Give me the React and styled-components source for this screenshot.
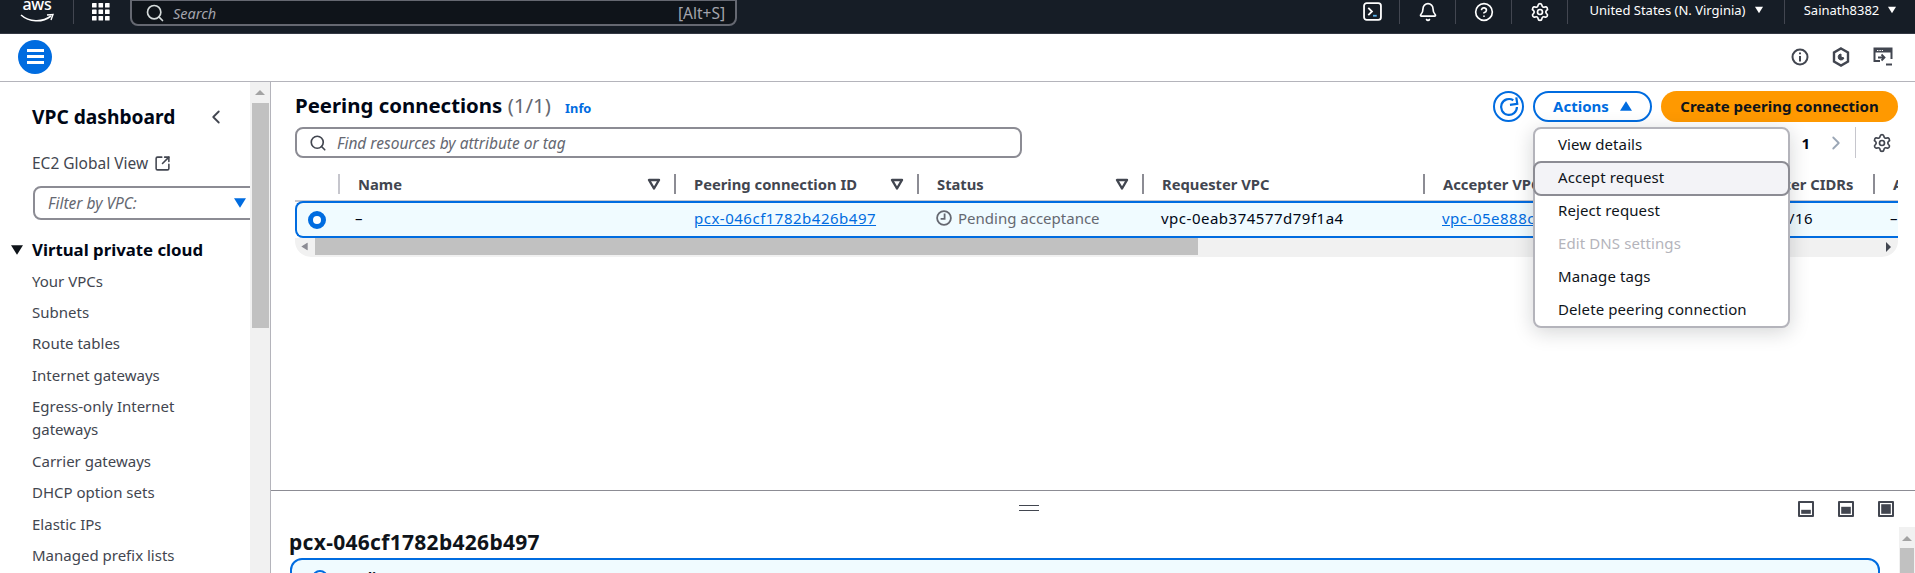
import React from "react";
import styled, { createGlobalStyle } from "styled-components";
import { Bell, CircleHelp, Settings, Search, ChevronLeft, ChevronRight, SquareArrowOutUpRight, X } from "lucide-react";

const FONT = `"Noto Sans", "Open Sans", sans-serif`;
const TABLE_COLS = "43px 336px 243px 225px 281px 288px 162px 200px";

const navLinks = [
  "Your VPCs",
  "Subnets",
  "Route tables",
  "Internet gateways",
  "Egress-only Internet gateways",
  "Carrier gateways",
  "DHCP option sets",
  "Elastic IPs",
  "Managed prefix lists",
];

const menuItems = [
  { label: "View details" },
  { label: "Accept request", active: true },
  { label: "Reject request" },
  { label: "Edit DNS settings", disabled: true },
  { label: "Manage tags" },
  { label: "Delete peering connection" },
];

function Caret({ size = 10, color = "#fff", up }) {
  return (
    <svg width={size} height={size} viewBox="0 0 10 10" style={{ flexShrink: 0 }}>
      <path d={up ? "M5 1 L10 9 L0 9 Z" : "M0 1 L10 1 L5 9 Z"} fill={color} />
    </svg>
  );
}

function FilterIcon() {
  return (
    <svg width="14" height="14" viewBox="0 0 14 14">
      <path d="M2 3 H12 L7 11.5 Z" fill="none" stroke="#424650" strokeWidth="2.4" strokeLinejoin="round" />
    </svg>
  );
}

function GridIcon() {
  return (
    <svg width="18" height="18" viewBox="0 0 18 18" fill="#fff">
      {[0, 6.5, 13].map((y) =>
        [0, 6.5, 13].map((x) => <rect key={`${x}-${y}`} x={x} y={y} width="4.6" height="4.6" rx="0.6" />)
      )}
    </svg>
  );
}

function AwsLogo() {
  return (
    <svg width="34" height="24" viewBox="0 0 34 24">
      <text x="17" y="10" textAnchor="middle" fill="#fff" fontFamily={FONT} fontSize="16" fontWeight="500" letterSpacing="-0.3">
        aws
      </text>
      <path d="M1 15 C9 22 22 23 31 16" fill="none" stroke="#fff" strokeWidth="1.6" />
      <path d="M27 15 L33 14.5 L31 20" fill="none" stroke="#fff" strokeWidth="1.4" />
    </svg>
  );
}

function TerminalIcon() {
  return (
    <svg width="19" height="19" viewBox="0 0 18 18" fill="none">
      <rect x="1" y="1" width="16" height="16" rx="2.5" stroke="#fff" strokeWidth="1.7" />
      <path d="M5 5.5 L8.5 9 L5 12.5" stroke="#fff" strokeWidth="1.7" />
      <path d="M9.5 13 H13" stroke="#5bb5f0" strokeWidth="1.7" />
    </svg>
  );
}

function RefreshIcon() {
  return (
    <svg width="22" height="22" viewBox="0 0 18 18" fill="none">
      <path d="M15.5 9 A6.5 6.5 0 1 1 12.5 3.5" stroke="#006ce0" strokeWidth="1.8" />
      <path d="M9.5 7 H15.5 V1.5" stroke="#006ce0" strokeWidth="1.8" transform="rotate(-8 12 5)" />
    </svg>
  );
}

function InfoCircle() {
  return (
    <svg width="18" height="18" viewBox="0 0 18 18" fill="none" stroke="#424650" strokeWidth="2">
      <circle cx="9" cy="9" r="7.5" />
      <path d="M9 8 V13.5" />
      <path d="M9 4.5 V6.3" />
    </svg>
  );
}

function HexIcon() {
  return (
    <svg width="18" height="20" viewBox="0 0 18 20" fill="none" stroke="#424650" strokeWidth="2.4">
      <path d="M9 1.5 L16 5.5 V14.5 L9 18.5 L2 14.5 V5.5 Z" />
      <path d="M9 7 A3 3 0 1 0 12 11 L9 10 Z" fill="#424650" strokeWidth="1" />
    </svg>
  );
}

function ScreenIcon() {
  return (
    <svg width="20" height="20" viewBox="0 0 20 20" fill="none">
      <path d="M7 14 H1.5 V1.5 H18.5 V12" stroke="#424650" strokeWidth="2" />
      <path d="M1.5 1.5 H18.5 V5.5 H1.5 Z" fill="#424650" />
      <path d="M4 3.5 H10" stroke="#fff" strokeWidth="1.2" strokeDasharray="1.4 1" />
      <path d="M5 9.5 H11 M8.5 6.5 L11.5 9.5 L8.5 12.5" stroke="#424650" strokeWidth="1.8" transform="translate(0 1)" />
      <path d="M13 17.5 H19" stroke="#424650" strokeWidth="2" />
    </svg>
  );
}

function ClockIcon() {
  return (
    <svg width="16" height="16" viewBox="0 0 16 16" fill="none" stroke="#656871" strokeWidth="1.8">
      <circle cx="8" cy="8" r="6.9" />
      <path d="M8.6 3.6 V8.8 H4.6" />
    </svg>
  );
}

function PanelIcon({ fill }) {
  return (
    <svg width="16" height="16" viewBox="0 0 16 16">
      <rect x="0" y="0" width="16" height="16" rx="1" fill="#424650" />
      <rect x="2" y="2" width="12" height="12" fill="#fff" />
      <rect x="3.2" y={14 - fill - 1.2} width="9.6" height={fill} fill="#424650" />
    </svg>
  );
}

function App() {
  return (
    <>
      <GlobalStyle />
      <Page>
        <TopNav>
          <LogoSlot>
            <AwsLogo />
          </LogoSlot>
          <NavDivider />
          <GridSlot>
            <GridIcon />
          </GridSlot>
          <GlobalSearch>
            <Search size={20} color="#d5dbdb" strokeWidth={2} />
            <SearchHint>Search</SearchHint>
            <Shortcut>[Alt+S]</Shortcut>
          </GlobalSearch>
          <NavRight>
            <NavIcon>
              <TerminalIcon />
            </NavIcon>
            <NavDivider />
            <NavIcon>
              <Bell size={20} color="#fff" strokeWidth={2} />
            </NavIcon>
            <NavDivider />
            <NavIcon>
              <CircleHelp size={20} color="#fff" strokeWidth={2} />
            </NavIcon>
            <NavDivider />
            <NavIcon>
              <Settings size={20} color="#fff" strokeWidth={2} />
            </NavIcon>
            <NavDivider />
            <NavMenu $width={216}>
              United States (N. Virginia) <Caret size={8} />
            </NavMenu>
            <NavDivider />
            <NavMenu $width={130}>
              Sainath8382 <Caret size={8} />
            </NavMenu>
          </NavRight>
        </TopNav>

        <SubBar>
          <MenuButton>
            <MenuLine />
            <MenuLine />
            <MenuLine />
          </MenuButton>
          <SubIcons>
            <InfoCircle />
            <HexIcon />
            <ScreenIcon />
          </SubIcons>
        </SubBar>

        <Main>
          <Sidebar>
            <SideContent>
              <SideHeader>
                <SideTitle>VPC dashboard</SideTitle>
                <ChevronLeft size={22} color="#424650" strokeWidth={2} />
              </SideHeader>
              <GlobalView>
                EC2 Global View
                <SquareArrowOutUpRight size={17} color="#424650" strokeWidth={2.2} />
              </GlobalView>
              <VpcFilter>
                <em>Filter by VPC:</em>
                <Caret size={12} color="#006ce0" />
              </VpcFilter>
              <SectionHead>
                <Caret size={12} color="#0f141a" />
                Virtual private cloud
              </SectionHead>
              <NavList>
                {navLinks.map((l) => (
                  <NavItem key={l}>{l}</NavItem>
                ))}
              </NavList>
            </SideContent>
            <SideScroll>
              <ScrollArrow />
              <SideThumb />
            </SideScroll>
          </Sidebar>

          <Content>
            <UpperPanel>
              <HeaderRow>
                <PageTitle>
                  Peering connections <Count>(1/1)</Count> <InfoLink>Info</InfoLink>
                </PageTitle>
                <Actions>
                  <RefreshButton>
                    <RefreshIcon />
                  </RefreshButton>
                  <ActionsButton>
                    Actions <Caret size={12} color="#006ce0" up />
                  </ActionsButton>
                  <PrimaryButton>Create peering connection</PrimaryButton>
                  <Menu>
                    {menuItems.map((m) => (
                      <MenuItem key={m.label} $active={m.active} $disabled={m.disabled}>
                        {m.label}
                      </MenuItem>
                    ))}
                  </Menu>
                </Actions>
              </HeaderRow>

              <FilterRow>
                <FilterInput>
                  <Search size={18} color="#424650" strokeWidth={2.2} />
                  <em>Find resources by attribute or tag</em>
                </FilterInput>
                <Pager>
                  <PageNum>1</PageNum>
                  <ChevronRight size={22} color="#9ba7b6" strokeWidth={2} />
                  <PagerDivider />
                  <Settings size={20} color="#424650" strokeWidth={2} />
                </Pager>
              </FilterRow>

              <TableWrap>
                <TableInner>
                  <HeadRow>
                    <HeadCell />
                    <HeadCell $light>
                      Name
                      <FilterIcon />
                    </HeadCell>
                    <HeadCell>
                      Peering connection ID
                      <FilterIcon />
                    </HeadCell>
                    <HeadCell>
                      Status
                      <FilterIcon />
                    </HeadCell>
                    <HeadCell>Requester VPC</HeadCell>
                    <HeadCell>Accepter VPC</HeadCell>
                    <HeadCell>Requester CIDRs</HeadCell>
                    <HeadCell>Accepter CIDRs</HeadCell>
                  </HeadRow>
                  <BodyRow>
                    <RadioCell>
                      <Radio />
                    </RadioCell>
                    <DashCell>–</DashCell>
                    <IdCell $pad={20}>
                      <CellLink>pcx-046cf1782b426b497</CellLink>
                    </IdCell>
                    <StatusCell>
                      <ClockIcon />
                      Pending acceptance
                    </StatusCell>
                    <IdCell $pad={19}>vpc-0eab374577d79f1a4</IdCell>
                    <IdCell $pad={19}>
                      <CellLink>vpc-05e888c2f3a1b7d60</CellLink>
                    </IdCell>
                    <IdCell $pad={19}>10.0.0.0/16</IdCell>
                    <DashCell>–</DashCell>
                  </BodyRow>
                </TableInner>
                <HScroll>
                  <HArrow>
                    <Caret size={8} color="#8c8c94" />
                  </HArrow>
                  <HThumb />
                  <HArrowRight />
                </HScroll>
              </TableWrap>
            </UpperPanel>

            <LowerPanel>
              <Toolbar>
                <Handle />
                <PanelIcons>
                  <PanelIcon fill={4} />
                  <PanelIcon fill={7} />
                  <PanelIcon fill={9.6} />
                </PanelIcons>
              </Toolbar>
              <LowerBody>
                <LowerContent>
                  <DetailTitle>pcx-046cf1782b426b497</DetailTitle>
                  <Alert>
                    <AlertIcon />
                    <AlertText>Pending request</AlertText>
                    <X size={18} color="#424650" strokeWidth={2.2} />
                  </Alert>
                </LowerContent>
                <LowerScroll>
                  <ScrollArrow />
                  <LowerThumb />
                </LowerScroll>
              </LowerBody>
            </LowerPanel>
          </Content>
        </Main>
      </Page>
    </>
  );
}

export default App;

const GlobalStyle = createGlobalStyle`
  html, body {
    margin: 0;
    padding: 0;
    background: #fff;
    overflow: hidden;
  }
  * {
    box-sizing: border-box;
  }
`;

const Page = styled.div`
  width: 1915px;
  height: 573px;
  overflow: hidden;
  display: flex;
  flex-direction: column;
  font-family: ${FONT};
  font-size: 15px;
  color: #000716;
`;

const TopNav = styled.header`
  height: 34px;
  flex-shrink: 0;
  display: flex;
  align-items: flex-start;
  background: #161d26;
  border-bottom: 1px solid #333843;
  color: #fff;
`;

const LogoSlot = styled.div`
  width: 73px;
  padding: 0 0 0 20px;
  height: 24px;
`;

const NavDivider = styled.span`
  width: 1px;
  height: 24px;
  background: #424650;
  flex-shrink: 0;
`;

const GridSlot = styled.div`
  width: 56px;
  padding: 3px 0 0 18px;
`;

const GlobalSearch = styled.div`
  width: 607px;
  height: 27px;
  margin-top: -1px;
  padding: 0 10px 0 13px;
  display: flex;
  align-items: center;
  gap: 8px;
  background: #0f141a;
  border: 2px solid #656871;
  border-radius: 0 0 8px 8px;
`;

const SearchHint = styled.em`
  color: #a4a4ad;
  font-size: 14.5px;
`;

const Shortcut = styled.span`
  margin-left: auto;
  color: #a4a4ad;
  font-size: 15.5px;
`;

const NavRight = styled.div`
  margin-left: auto;
  display: flex;
  align-items: flex-start;
`;

const NavIcon = styled.div`
  width: 55px;
  height: 24px;
  display: flex;
  justify-content: center;
  padding: 2px 0 0 1px;
`;

const NavMenu = styled.div`
  width: ${(p) => p.$width}px;
  height: 24px;
  display: flex;
  align-items: center;
  justify-content: center;
  gap: 9px;
  padding-bottom: 4px;
  font-size: 13px;
  white-space: nowrap;
`;

const SubBar = styled.div`
  height: 48px;
  flex-shrink: 0;
  display: flex;
  align-items: center;
  justify-content: space-between;
  padding: 0 22px 2px 18px;
  border-bottom: 1px solid #b4b4bb;
`;

const MenuButton = styled.div`
  width: 34px;
  height: 34px;
  border-radius: 50%;
  background: #006ce0;
  display: flex;
  flex-direction: column;
  align-items: center;
  justify-content: center;
  gap: 3.5px;
`;

const MenuLine = styled.span`
  width: 17px;
  height: 2.5px;
  background: #fff;
`;

const SubIcons = styled.div`
  display: flex;
  align-items: center;
  gap: 23px;
`;

const Main = styled.div`
  flex: 1;
  min-height: 0;
  display: flex;
`;

const Sidebar = styled.aside`
  width: 271px;
  flex-shrink: 0;
  display: flex;
  border-right: 1px solid #b4b4bb;
`;

const SideContent = styled.div`
  width: 250px;
  overflow: hidden;
  padding: 23px 0 0 32px;
`;

const SideHeader = styled.div`
  width: 195px;
  height: 24px;
  display: flex;
  align-items: center;
  justify-content: space-between;
`;

const SideTitle = styled.h2`
  margin: 0;
  font-size: 19.2px;
  line-height: 24px;
  font-weight: 700;
`;

const GlobalView = styled.div`
  margin-top: 22.5px;
  display: flex;
  align-items: center;
  gap: 6px;
  font-size: 15.5px;
  line-height: 23px;
  color: #424650;
`;

const VpcFilter = styled.div`
  margin: 11.5px 0 0 1px;
  width: 230px;
  height: 34px;
  display: flex;
  align-items: center;
  justify-content: space-between;
  padding: 0 15px 0 13px;
  border: 2px solid #8c8c94;
  border-radius: 8px;
  font-size: 15.5px;
  color: #656871;
`;

const SectionHead = styled.div`
  margin: 18px 0 0 -21px;
  display: flex;
  align-items: center;
  gap: 9px;
  font-size: 16.8px;
  font-weight: 700;
  line-height: 24px;
`;

const NavList = styled.div`
  margin-top: 7.5px;
  width: 190px;
  display: flex;
  flex-direction: column;
  gap: 8.45px;
`;

const NavItem = styled.div`
  line-height: 23px;
  color: #424650;
`;

const SideScroll = styled.div`
  width: 20px;
  background: #f1f1f1;
  display: flex;
  flex-direction: column;
  align-items: center;
  padding-top: 8px;
`;

const ScrollArrow = styled.span`
  width: 0;
  height: 0;
  border-left: 5px solid transparent;
  border-right: 5px solid transparent;
  border-bottom: 5px solid #a3a3a3;
`;

const SideThumb = styled.div`
  margin-top: 8px;
  width: 17px;
  height: 225px;
  background: #c1c1c1;
`;

const Content = styled.div`
  flex: 1;
  min-width: 0;
  display: flex;
  flex-direction: column;
`;

const UpperPanel = styled.section`
  height: 409px;
  flex-shrink: 0;
  padding: 9px 17px 0 24px;
  border-bottom: 1px solid #8c8c94;
`;

const HeaderRow = styled.div`
  height: 31px;
  display: flex;
  align-items: center;
  justify-content: space-between;
`;

const PageTitle = styled.h1`
  margin: 0;
  font-size: 20.4px;
  line-height: 30px;
  font-weight: 700;
`;

const Count = styled.span`
  font-weight: 400;
  color: #656871;
`;

const InfoLink = styled.span`
  margin-left: 9px;
  font-size: 12.8px;
  font-weight: 700;
  color: #006ce0;
`;

const Actions = styled.div`
  position: relative;
  display: flex;
  align-items: center;
  gap: 9px;
`;

const RefreshButton = styled.div`
  width: 31px;
  height: 31px;
  border: 2px solid #006ce0;
  border-radius: 50%;
  display: flex;
  align-items: center;
  justify-content: center;
`;

const ActionsButton = styled.div`
  width: 119px;
  height: 31px;
  padding-bottom: 2px;
  border: 2px solid #006ce0;
  border-radius: 16px;
  display: flex;
  align-items: center;
  justify-content: center;
  gap: 11px;
  color: #006ce0;
  font-weight: 700;
`;

const PrimaryButton = styled.div`
  width: 237px;
  height: 31px;
  padding-bottom: 2px;
  background: #ff9900;
  border-radius: 16px;
  display: flex;
  align-items: center;
  justify-content: center;
  font-weight: 700;
  color: #0f141a;
`;

const Menu = styled.div`
  position: absolute;
  z-index: 5;
  top: 36px;
  left: 40px;
  width: 257px;
  height: 201px;
  background: #fff;
  border: 2px solid #b4b4bb;
  border-radius: 8px;
  box-shadow: 0 4px 20px rgba(15, 20, 26, 0.18);
`;

const MenuItem = styled.div`
  height: 33px;
  padding: 0 22px 3px 23px;
  display: flex;
  align-items: center;
  letter-spacing: 0.1px;
  color: ${(p) => (p.$disabled ? "#b4b4bb" : "#0f141a")};
  ${(p) =>
    p.$active &&
    `
    height: 35px;
    margin: -1px -2px;
    padding-left: 23px;
    background: #f3f3f7;
    border: 2px solid #8c8c94;
    border-radius: 8px;
  `}
`;

const FilterRow = styled.div`
  margin-top: 5px;
  height: 31px;
  display: flex;
  align-items: center;
  justify-content: space-between;
`;

const FilterInput = styled.div`
  width: 727px;
  height: 31px;
  display: flex;
  align-items: center;
  gap: 10px;
  padding: 0 12px;
  border: 2px solid #8c8c94;
  border-radius: 8px;
  font-size: 15.5px;
  color: #656871;
`;

const Pager = styled.div`
  display: flex;
  align-items: center;
  gap: 15px;
  padding-right: 6px;
`;

const PageNum = styled.span`
  font-weight: 700;
`;

const PagerDivider = styled.span`
  width: 1px;
  height: 31px;
  background: #c6c6cd;
  margin: 0 1px 0 -7px;
`;

const TableWrap = styled.div`
  margin-top: 14px;
  width: 1603px;
  overflow: hidden;
  border-radius: 0 0 16px 16px;
`;

const TableInner = styled.div`
  width: 1778px;
`;

const HeadRow = styled.div`
  height: 30px;
  display: grid;
  grid-template-columns: ${TABLE_COLS};
  align-items: center;
  border-bottom: 2px solid #c6c6cd;
`;

const HeadCell = styled.div`
  height: 20px;
  margin-top: -5px;
  display: flex;
  align-items: center;
  justify-content: space-between;
  padding: 0 13px 0 18px;
  white-space: nowrap;
  font-size: 14.75px;
  font-weight: 700;
  color: #424650;
  &:not(:first-child) {
    border-left: 2px solid ${(p) => (p.$light ? "#c6c6cd" : "#8c8c94")};
  }
`;

const BodyRow = styled.div`
  height: 37px;
  margin-top: -1px;
  display: grid;
  grid-template-columns: ${TABLE_COLS};
  align-items: center;
  margin-right: -2px;
  background: #f0fbff;
  border: 2px solid #006ce0;
  border-right: 0;
  border-radius: 8px 0 0 8px;
`;

const RadioCell = styled.div`
  padding-left: 11px;
  margin-left: -2px;
  display: flex;
  align-items: center;
`;

const Radio = styled.span`
  margin-left: 2px;
  width: 18px;
  height: 18px;
  border-radius: 50%;
  border: 5.5px solid #006ce0;
  background: #fff;
`;

const Cell = styled.div`
  margin-top: -3px;
  white-space: nowrap;
  overflow: hidden;
  position: relative;
  left: -2px;
`;

const DashCell = styled(Cell)`
  padding-left: 17px;
`;

const IdCell = styled(Cell)`
  padding-left: ${(p) => p.$pad}px;
  letter-spacing: 0.5px;
`;

const CellLink = styled.span`
  color: #006ce0;
  text-decoration: underline;
`;

const StatusCell = styled(Cell)`
  padding-left: 19px;
  display: flex;
  align-items: center;
  gap: 6px;
  color: #656871;
`;

const HScroll = styled.div`
  height: 19px;
  background: #f1f1f1;
  display: flex;
  align-items: flex-start;
`;

const HArrow = styled.div`
  width: 20px;
  height: 17px;
  display: flex;
  align-items: center;
  justify-content: center;
  transform: rotate(90deg);
`;

const HThumb = styled.div`
  width: 883px;
  height: 17px;
  background: #c1c1c1;
`;

const HArrowRight = styled.span`
  margin: 4px 0 0 688px;
  width: 0;
  height: 0;
  border-top: 5px solid transparent;
  border-bottom: 5px solid transparent;
  border-left: 5px solid #424650;
`;

const LowerPanel = styled.section`
  flex: 1;
  min-height: 0;
  display: flex;
  flex-direction: column;
`;

const Toolbar = styled.div`
  flex-shrink: 0;
  height: 36px;
  padding: 10px 21px 0 748px;
  display: flex;
  align-items: flex-start;
`;

const Handle = styled.div`
  width: 20px;
  height: 6px;
  margin-top: 4px;
  border-top: 1.5px solid #424650;
  border-bottom: 1.5px solid #424650;
`;

const PanelIcons = styled.div`
  margin-left: auto;
  display: flex;
  gap: 24px;
`;

const LowerBody = styled.div`
  flex: 1;
  min-height: 0;
  display: flex;
`;

const LowerContent = styled.div`
  flex: 1;
  min-width: 0;
  padding: 1px 19px 0 18px;
`;

const DetailTitle = styled.h2`
  margin: 0;
  font-size: 21px;
  line-height: 28px;
  letter-spacing: 0.3px;
  font-weight: 700;
  color: #0f141a;
`;

const Alert = styled.div`
  margin: 2px 0 0 1px;
  height: 60px;
  display: flex;
  align-items: flex-start;
  gap: 9px;
  padding: 10px 20px 0 20px;
  background: #f0fbff;
  border: 2px solid #006ce0;
  border-radius: 12px;
`;

const AlertIcon = styled.span`
  width: 16px;
  height: 16px;
  border-radius: 50%;
  border: 2px solid #006ce0;
`;

const AlertText = styled.span`
  flex: 1;
  font-size: 14px;
  font-weight: 700;
  line-height: 20px;
  margin-top: -2px;
`;

const LowerScroll = styled.div`
  width: 16px;
  flex-shrink: 0;
  background: #f1f1f1;
  display: flex;
  flex-direction: column;
  align-items: center;
  padding-top: 9px;
`;

const LowerThumb = styled.div`
  margin-top: 7px;
  width: 14px;
  flex: 1;
  background: #c1c1c1;
`;
